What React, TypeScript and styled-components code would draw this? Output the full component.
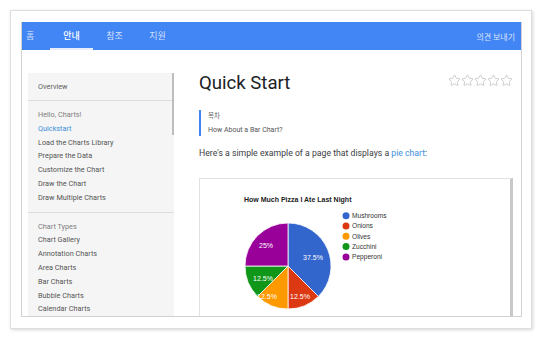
import React from 'react';
import styled, {createGlobalStyle} from 'styled-components';
import {Star} from 'lucide-react';

const GlobalStyle = createGlobalStyle`
    html, body {
        margin: 0;
        padding: 0;
        background: #ffffff;
    }

    body {
        width: 542px;
        height: 338px;
        overflow: hidden;
        font-family: Roboto, "Noto Sans CJK KR", sans-serif;
    }
`;

interface Slice {
    name: string;
    value: number;
    color: string;
    label: [number, number];
}

const slices: Slice[] = [
    {name: 'Mushrooms', value: 3, color: '#3366cc', label: [113, 78]},
    {name: 'Onions', value: 1, color: '#dc3912', label: [100, 117]},
    {name: 'Olives', value: 1, color: '#ff9900', label: [67, 117]},
    {name: 'Zucchini', value: 1, color: '#109618', label: [63, 99]},
    {name: 'Pepperoni', value: 2, color: '#990099', label: [66, 66]},
];

const sidebarGroups = [
    {
        heading: 'Hello, Charts!',
        items: ['Quickstart', 'Load the Charts Library', 'Prepare the Data', 'Customize the Chart', 'Draw the Chart', 'Draw Multiple Charts'],
        current: 'Quickstart',
    },
    {
        heading: 'Chart Types',
        items: ['Chart Gallery', 'Annotation Charts', 'Area Charts', 'Bar Charts', 'Bubble Charts', 'Calendar Charts'],
        current: '',
    },
];

const Page = styled.div`
    padding: 10px 0 0 10px;
`;

const Frame = styled.div`
    width: 522px;
    height: 319px;
    padding: 11px 0 0 10px;
    box-sizing: border-box;
    border: 1px solid #dedede;
    box-shadow: 1px 1px 3px rgba(0, 0, 0, 0.16);
    background: #ffffff;
`;

const Shot = styled.div`
    display: flex;
    flex-direction: column;
    width: 501px;
    height: 295px;
    box-sizing: border-box;
    border: 1px solid #d2d2d2;
    border-top: none;
    overflow: hidden;
`;

const Header = styled.div`
    display: flex;
    align-items: center;
    height: 28px;
    margin: 0 -1px;
    background: #4285f4;
    flex-shrink: 0;
`;

const Tab = styled.div<{$active?: boolean; $width: number}>`
    display: flex;
    align-items: center;
    justify-content: center;
    width: ${p => p.$width}px;
    height: 28px;
    box-sizing: border-box;
    padding-top: 1px;
    border-bottom: 2px solid ${p => (p.$active ? '#e8eefc' : 'transparent')};
    font-family: "Noto Sans CJK KR", sans-serif;
    font-size: 9px;
    font-weight: ${p => (p.$active ? 500 : 400)};
    color: ${p => (p.$active ? '#ffffff' : 'rgba(255, 255, 255, 0.78)')};
`;

const HomeTab = styled(Tab)`
    justify-content: flex-start;
    padding-left: 5px;
`;

const Feedback = styled.div`
    margin-left: auto;
    padding-right: 7px;
    font-family: "Noto Sans CJK KR", sans-serif;
    font-size: 8px;
    color: rgba(255, 255, 255, 0.82);
`;

const Body = styled.div`
    display: flex;
    flex: 1;
    min-height: 0;
`;

const Sidebar = styled.div`
    position: relative;
    flex-shrink: 0;
    width: 146px;
    margin: 23px 0 0 6px;
    background: #f5f5f5;
    font-size: 7.3px;
`;

const ScrollThumb = styled.div`
    position: absolute;
    top: 0;
    right: 0;
    width: 2px;
    height: 62px;
    background: #bdbdbd;
`;

const Overview = styled.div`
    display: flex;
    align-items: center;
    height: 27px;
    padding-left: 10px;
    border-bottom: 1px solid #dcdcdc;
    color: #5f5f5f;
`;

const Group = styled.div<{$divider: boolean}>`
    padding: 7px 0;
    border-bottom: ${p => (p.$divider ? '1px solid #dcdcdc' : 'none')};
`;

const NavItem = styled.div<{$kind: 'heading' | 'current' | 'item'}>`
    padding-left: 10px;
    line-height: 13.8px;
    white-space: nowrap;
    color: ${p => ({heading: '#808080', current: '#3d8fd9', item: '#555555'}[p.$kind])};
`;

const Main = styled.div`
    flex: 1;
    min-width: 0;
    padding: 23px 8px 0 25px;
`;

const TitleRow = styled.div`
    display: flex;
    justify-content: space-between;
    align-items: flex-start;
`;

const Title = styled.h1`
    margin: 0;
    font-size: 18.6px;
    font-weight: 400;
    line-height: 21px;
    color: #202124;
`;

const Stars = styled.div`
    display: flex;
    margin-top: 1px;
    color: #bdbdbd;
`;

const Quote = styled.div`
    margin-top: 16px;
    padding-left: 7px;
    border-left: 2px solid #4285f4;
`;

const QuoteLine = styled.div<{$gap?: number}>`
    margin-top: ${p => p.$gap ?? 0}px;
    font-size: 7px;
    line-height: 11px;
    color: #555555;
`;

const QuoteKo = styled(QuoteLine)`
    font-family: "Noto Sans CJK KR", sans-serif;
    font-size: 6.5px;
    color: #666666;
`;

const Lead = styled.p`
    margin: 11.5px 0 0;
    font-size: 8.7px;
    line-height: 12px;
    color: #3c4043;
`;

const Link = styled.span`
    color: #3d8fd9;
`;

const ChartBox = styled.div`
    margin-top: 19px;
    height: 160px;
    border: 1px solid #e2e2e2;
    border-right: 3px solid #c8c8c8;
`;

const ChartSvg = styled.svg`
    display: block;
    font-family: "Liberation Sans", Arial, sans-serif;
`;

const CX = 88;
const CY = 87;
const R = 43;

const point = (deg: number) => {
    const rad = (deg * Math.PI) / 180;
    return [CX + R * Math.sin(rad), CY - R * Math.cos(rad)];
};

const PieChart = () => {
    const total = slices.reduce((acc, s) => acc + s.value, 0);
    let start = 0;

    return (
        <ChartSvg
            width={312}
            height={150}
        >
            <text
                x={44}
                y={22.5}
                fontSize={7}
                fontWeight={700}
                fill='#222222'
            >
                {'How Much Pizza I Ate Last Night'}
            </text>
            {slices.map((s) => {
                const sweep = (s.value / total) * 360;
                const [x1, y1] = point(start);
                const [x2, y2] = point(start + sweep);
                const large = sweep > 180 ? 1 : 0;
                start += sweep;
                return (
                    <path
                        key={s.name}
                        d={`M${CX} ${CY} L${x1} ${y1} A${R} ${R} 0 ${large} 1 ${x2} ${y2} Z`}
                        fill={s.color}
                        stroke='#ffffff'
                        strokeWidth={0.8}
                    />
                );
            })}
            {slices.map(s => (
                <text
                    key={s.name}
                    x={s.label[0]}
                    y={s.label[1] + 2.5}
                    fontSize={7}
                    fill='#ffffff'
                    textAnchor='middle'
                >
                    {`${((s.value / total) * 100).toFixed(s.value === 2 ? 0 : 1)}%`}
                </text>
            ))}
            {slices.map((s, i) => (
                <g key={s.name}>
                    <circle
                        cx={146}
                        cy={36.7 + (i * 10.3)}
                        r={3.5}
                        fill={s.color}
                    />
                    <text
                        x={152}
                        y={36.7 + (i * 10.3) + 2.4}
                        fontSize={6.6}
                        fill='#333333'
                    >
                        {s.name}
                    </text>
                </g>
            ))}
        </ChartSvg>
    );
};

const App = () => {
    return (
        <Page>
            <GlobalStyle/>
            <Frame>
                <Shot>
                    <Header>
                        <HomeTab $width={29}>{'홈'}</HomeTab>
                        <Tab
                            $width={43}
                            $active={true}
                        >
                            {'안내'}
                        </Tab>
                        <Tab $width={43}>{'참조'}</Tab>
                        <Tab $width={43}>{'지원'}</Tab>
                        <Feedback>{'의견 보내기'}</Feedback>
                    </Header>
                    <Body>
                        <Sidebar>
                            <ScrollThumb/>
                            <Overview>{'Overview'}</Overview>
                            {sidebarGroups.map((g, i) => (
                                <Group
                                    key={g.heading}
                                    $divider={i === 0}
                                >
                                    <NavItem $kind='heading'>{g.heading}</NavItem>
                                    {g.items.map(item => (
                                        <NavItem
                                            key={item}
                                            $kind={item === g.current ? 'current' : 'item'}
                                        >
                                            {item}
                                        </NavItem>
                                    ))}
                                </Group>
                            ))}
                        </Sidebar>
                        <Main>
                            <TitleRow>
                                <Title>{'Quick Start'}</Title>
                                <Stars>
                                    {[0, 1, 2, 3, 4].map(n => (
                                        <Star
                                            key={n}
                                            size={13}
                                            strokeWidth={1.4}
                                        />
                                    ))}
                                </Stars>
                            </TitleRow>
                            <Quote>
                                <QuoteKo>{'목차'}</QuoteKo>
                                <QuoteLine $gap={3.5}>{'How About a Bar Chart?'}</QuoteLine>
                            </Quote>
                            <Lead>
                                {"Here's a simple example of a page that displays a "}
                                <Link>{'pie chart'}</Link>
                                {':'}
                            </Lead>
                            <ChartBox>
                                <PieChart/>
                            </ChartBox>
                        </Main>
                    </Body>
                </Shot>
            </Frame>
        </Page>
    );
};

export default App;
